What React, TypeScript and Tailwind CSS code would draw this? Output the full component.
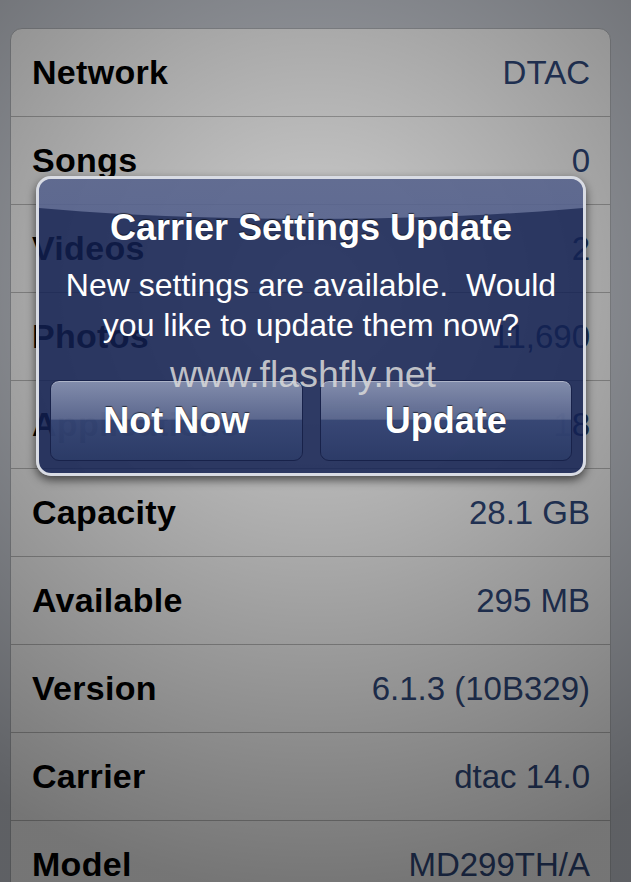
import React from 'react';

const rows: [string, string][] = [
  ['Network', 'DTAC'],
  ['Songs', '0'],
  ['Videos', '2'],
  ['Photos', '11,690'],
  ['Applications', '18'],
  ['Capacity', '28.1 GB'],
  ['Available', '295 MB'],
  ['Version', '6.1.3 (10B329)'],
  ['Carrier', 'dtac 14.0'],
  ['Model', 'MD299TH/A'],
];

const font = { fontFamily: '"Liberation Sans", Arial, sans-serif' };

function AlertButton({ label }: { label: string }) {
  return (
    <button className="flex-1 h-[81px] rounded-[9px] border border-[#18224a] shadow-[inset_0_1px_0_rgba(255,255,255,0.35)] bg-[linear-gradient(to_bottom,rgba(140,150,180,0.9)_0%,rgba(98,110,148,0.88)_48%,rgba(58,74,120,0.85)_50%,rgba(44,60,104,0.85)_100%)] text-white font-bold text-[36px] leading-none [text-shadow:0_-1px_1px_rgba(0,0,0,0.6)]">
      {label}
    </button>
  );
}

export default function App() {
  return (
    <div className="relative w-full h-[882px] overflow-hidden bg-[#c5c9d1]" style={font}>
      {/* grouped table */}
      <div className="ml-[10px] mr-[20px] mt-[28px] rounded-t-[12px] bg-[#f5f5f5] border border-[#aeb1b6]">
        {rows.map(([label, value]) => (
          <div
            key={label}
            className="h-[88px] pl-[21px] pr-[20px] flex items-center justify-between border-b border-[#b6b6b6]"
          >
            <span className="text-[34px] font-bold text-black tracking-[0.3px]">{label}</span>
            <span className="text-[33px] text-[#2f4778]">{value}</span>
          </div>
        ))}
      </div>

      {/* dim overlay */}
      <div className="absolute inset-0 bg-[radial-gradient(circle_at_50%_33%,rgba(0,0,0,0.15)_0px,rgba(0,0,0,0.3)_250px,rgba(0,0,0,0.52)_600px)]" />

      {/* alert */}
      <div className="absolute left-[36px] top-[176px] w-[550px] h-[300px] rounded-[15px] border-[3px] border-[#d9dce4] bg-[rgba(18,32,82,0.84)] shadow-[0_4px_10px_rgba(0,0,0,0.6)] overflow-hidden flex flex-col">
        <div className="absolute left-[-60%] w-[220%] top-[-160px] h-[200px] rounded-[50%] bg-[linear-gradient(to_bottom,rgba(255,255,255,0.3),rgba(170,180,215,0.4))]" />
        <div className="relative pt-[29px] px-[11px] text-center text-white">
          <div className="text-[36px] font-bold leading-[40px] [text-shadow:0_-1px_1px_rgba(0,0,0,0.6)]">
            Carrier Settings Update
          </div>
          <div className="mt-[17px] text-[32px] leading-[40px]">
            New settings are available.&nbsp; Would
            <br />
            you like to update them now?
          </div>
        </div>
        <div className="relative mt-auto px-[11px] pb-[12px] flex gap-[17px]">
          <AlertButton label="Not Now" />
          <AlertButton label="Update" />
        </div>
      </div>

      {/* watermark */}
      <div className="absolute left-0 right-0 top-[356px] flex justify-center pr-[25px]">
        <span className="text-[37.5px] leading-[37px] text-[rgba(218,218,218,0.85)]">www.flashfly.net</span>
      </div>
    </div>
  );
}
